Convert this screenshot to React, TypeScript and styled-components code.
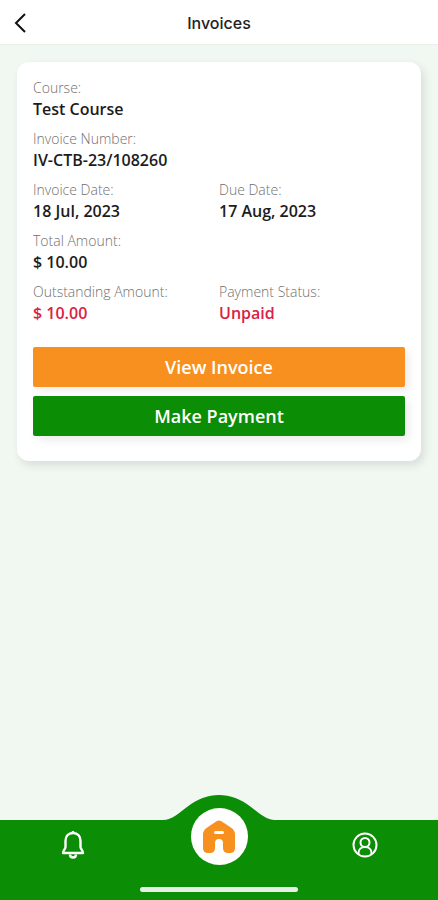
import React from "react";
import styled, { createGlobalStyle } from "styled-components";

const GlobalStyle = createGlobalStyle`
  *, *::before, *::after { box-sizing: border-box; }
  body { margin: 0; background: #f1f8f2; font-family: "Open Sans", "Noto Sans", sans-serif; }
  button { font: inherit; border: 0; cursor: pointer; }
`;

const Screen = styled.div`
  min-height: 100vh;
  display: flex;
  flex-direction: column;
`;

const Header = styled.header`
  display: grid;
  grid-template-columns: 40px 1fr 40px;
  align-items: center;
  height: 45px;
  background: #fff;
  border-bottom: 1px solid #eceeec;
`;

const BackButton = styled.button`
  display: flex;
  align-items: center;
  justify-content: center;
  height: 44px;
  padding: 2px 0 0;
  background: none;
  color: #111;
`;

const Title = styled.h1`
  margin: 0;
  padding-top: 2px;
  text-align: center;
  font-family: Inter, sans-serif;
  font-size: 16px;
  font-weight: 500;
  line-height: 24px;
  color: #222;
`;

const Content = styled.main`
  flex: 1;
  padding: 17px;
`;

const Card = styled.section`
  padding: 16px 16px 25px;
  border-radius: 12px;
  background: #fff;
  box-shadow: 3px 4px 10px rgba(0, 0, 0, 0.11);
`;

const Details = styled.dl`
  display: grid;
  grid-template-columns: 1fr 1fr;
  row-gap: 9px;
  margin: 0;
`;

const Field = styled.div<{ $wide?: boolean }>`
  grid-column: ${({ $wide }) => ($wide ? "1 / -1" : "auto")};
`;

const Label = styled.dt`
  font-size: 14px;
  font-weight: 300;
  line-height: 20px;
  color: #707070;
`;

const Value = styled.dd<{ $due?: boolean }>`
  margin: 0;
  font-size: 16px;
  font-weight: 600;
  line-height: 22px;
  color: ${({ $due }) => ($due ? "#dc2044" : "#1c1c1c")};
`;

const Actions = styled.div`
  display: grid;
  gap: 9px;
  margin-top: 23px;
`;

const ActionButton = styled.button<{ $color: string }>`
  height: 40px;
  border-radius: 2px;
  background: ${({ $color }) => $color};
  color: #fff;
  && {
    font-size: 18px;
    font-weight: 600;
  }
  box-shadow: 4px 4px 8px rgba(0, 0, 0, 0.08);
`;

const TabBar = styled.nav`
  position: relative;
  display: grid;
  grid-template-columns: 1fr 1fr 1fr;
  grid-template-rows: 50px 30px;
  justify-items: center;
  align-items: center;
  background: #0b8d05;
`;

const Hump = styled.svg`
  position: absolute;
  bottom: 100%;
  left: 50%;
  margin: 0 0 -1px -56px;
`;

const TabButton = styled.button`
  display: flex;
  padding: 4px;
  background: none;
  color: #fff;
`;

const HomeButton = styled.button`
  z-index: 1;
  display: grid;
  place-items: center;
  align-self: end;
  width: 57px;
  height: 57px;
  margin-bottom: 5px;
  padding: 0;
  border-radius: 50%;
  background: #fff;
`;

const HomeIndicator = styled.div`
  grid-column: 1 / -1;
  width: 36%;
  height: 5px;
  margin-top: 9px;
  border-radius: 3px;
  background: #e6eee6;
`;

const fields = [
  { label: "Course:", value: "Test Course", wide: true },
  { label: "Invoice Number:", value: "IV-CTB-23/108260", wide: true },
  { label: "Invoice Date:", value: "18 Jul, 2023" },
  { label: "Due Date:", value: "17 Aug, 2023" },
  { label: "Total Amount:", value: "$ 10.00", wide: true },
  { label: "Outstanding Amount:", value: "$ 10.00", due: true },
  { label: "Payment Status:", value: "Unpaid", due: true },
];

export default function App() {
  return (
    <Screen>
      <GlobalStyle />
      <Header>
        <BackButton aria-label="Back">
          <svg width="12" height="20" viewBox="0 0 12 20" fill="none" stroke="currentColor" strokeWidth="2">
            <path d="M11 1 2 10l9 9" />
          </svg>
        </BackButton>
        <Title>Invoices</Title>
      </Header>
      <Content>
        <Card>
          <Details>
            {fields.map(({ label, value, wide, due }) => (
              <Field key={label} $wide={wide}>
                <Label>{label}</Label>
                <Value $due={due}>{value}</Value>
              </Field>
            ))}
          </Details>
          <Actions>
            <ActionButton $color="#f7901e">View Invoice</ActionButton>
            <ActionButton $color="#0b8d05">Make Payment</ActionButton>
          </Actions>
        </Card>
      </Content>
      <TabBar>
        <Hump width="112" height="26" viewBox="0 0 112 26" aria-hidden="true">
          <path d="M0 26v-1c9 0 16-7 24-13 20-16 44-16 64 0 8 6 15 13 24 13v1z" fill="#0b8d05" />
        </Hump>
        <TabButton aria-label="Notifications">
          <svg width="26" height="30" viewBox="0 0 26 30" fill="none" stroke="currentColor" strokeWidth="2.4" strokeLinejoin="round">
            <path d="M13 3c-5 0-7.500 3.500-7.500 8v6c0 2-2.500 3.500-2.500 6h20c0-2.500-2.500-4-2.500-6v-6c0-4.500-2.500-8-7.500-8z" />
            <path d="M13 1v2M10 24.500c0 4 6 4 6 0" />
          </svg>
        </TabButton>
        <HomeButton aria-label="Home">
          <svg width="32" height="34" viewBox="0 0 32 34">
            <path
              d="M13.5 1.3q2.5-1.6 5 0l10 6.7q3.5 2.5 3.5 6.5V28q0 5-5 5h-2q-5 0-5-5v-5q0-4-4-4t-4 4v5q0 5-5 5H5q-5 0-5-5V14.5Q0 10.500 3.500 8z"
              fill="#f7901e"
            />
            <path d="M12.500 12.500h7" stroke="#fff" strokeWidth="3" strokeLinecap="round" />
          </svg>
        </HomeButton>
        <TabButton aria-label="Profile">
          <svg width="26" height="26" viewBox="0 0 26 26" fill="none" stroke="currentColor" strokeWidth="2">
            <circle cx="13" cy="13" r="11.500" />
            <circle cx="13" cy="10.500" r="4.500" />
            <path d="M6.500 22v-1c0-8 13-8 13 0v1" />
          </svg>
        </TabButton>
        <HomeIndicator />
      </TabBar>
    </Screen>
  );
}
